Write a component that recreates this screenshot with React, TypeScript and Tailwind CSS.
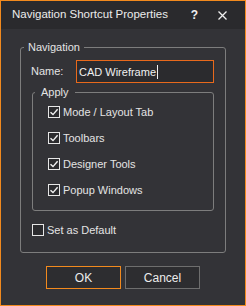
import { useState } from 'react'

const font = { fontFamily: '"Liberation Sans", Arial, sans-serif' }

function Check({ checked }: { checked: boolean }) {
  return (
    <span className="flex h-[12px] w-[12px] shrink-0 items-center justify-center border border-[#e6e6e6] bg-[#2b2b2e]">
      {checked && (
        <svg width="10" height="10" viewBox="0 0 10 10" fill="none">
          <path d="M1.5 5.2 L4 7.6 L8.6 2.2" stroke="#f2f2f2" strokeWidth="1.4" />
        </svg>
      )}
    </span>
  )
}

function CheckRow({ label, checked, onToggle }: { label: string; checked: boolean; onToggle: () => void }) {
  return (
    <label className="flex h-[14px] cursor-default items-center gap-[3px]" onClick={onToggle}>
      <Check checked={checked} />
      <span className="leading-[14px]">{label}</span>
    </label>
  )
}

export default function App() {
  const [name] = useState('CAD Wireframe')
  const [apply, setApply] = useState({ mode: true, toolbars: true, designer: true, popups: true })
  const [isDefault, setIsDefault] = useState(false)

  const toggle = (key: keyof typeof apply) => setApply(prev => ({ ...prev, [key]: !prev[key] }))

  return (
    <div
      className="flex h-[306px] w-[246px] flex-col border border-[#f28a1e] bg-[#333337] text-[11px] text-[#e4e4e4]"
      style={font}
    >
      {/* Title bar */}
      <div className="flex h-[28px] shrink-0 items-center bg-[#2a2a2d] pl-[11px] pr-[18px]">
        <span className="text-[11.5px] text-[#ececec]">Navigation Shortcut Properties</span>
        <span className="ml-auto mr-[20px] text-[12px] font-bold text-[#f0f0f0]">?</span>
        <svg width="9" height="9" viewBox="0 0 9 9">
          <path d="M0.5 0.5 L8.5 8.5 M8.5 0.5 L0.5 8.5" stroke="#f0f0f0" strokeWidth="1.3" />
        </svg>
      </div>

      {/* Body */}
      <div className="flex flex-1 flex-col px-[19px] pt-[12px]">
        <fieldset className="rounded-[3px] border border-[#7d7d7d] pb-[15px]">
          <legend className="ml-[3px] px-[4px] leading-[13px]">Navigation</legend>

          <div className="mt-[6px] flex items-center">
            <span className="w-[55px] pl-[10px]">Name:</span>
            {/* text box with the caret after the name */}
            <div className="flex h-[23px] w-[138px] items-center border border-[#e8691c] bg-[#2b2b2e] px-[2px] text-[#f0f0f0]">
              <span className="leading-[14px]">{name}</span>
              <span className="ml-[1px] h-[14px] w-px bg-[#f0f0f0]" />
            </div>
          </div>

          <fieldset className="ml-[11px] mt-[3px] w-[182px] rounded-[3px] border border-[#7d7d7d] pb-[13px]">
            <legend className="ml-[2px] px-[6px] leading-[13px]">Apply</legend>
            <div className="mt-[6px] flex flex-col gap-[12px] pl-[15px]">
              <CheckRow label="Mode / Layout Tab" checked={apply.mode} onToggle={() => toggle('mode')} />
              <CheckRow label="Toolbars" checked={apply.toolbars} onToggle={() => toggle('toolbars')} />
              <CheckRow label="Designer Tools" checked={apply.designer} onToggle={() => toggle('designer')} />
              <CheckRow label="Popup Windows" checked={apply.popups} onToggle={() => toggle('popups')} />
            </div>
          </fieldset>

          <div className="ml-[11px] mt-[12px]">
            <CheckRow label="Set as Default" checked={isDefault} onToggle={() => setIsDefault(v => !v)} />
          </div>
        </fieldset>

        {/* Buttons */}
        <div className="mt-[13px] flex justify-center gap-[4px]">
          <button className="h-[23px] w-[75px] border border-[#f28a1e] bg-[#2d2d30] text-[12px] text-[#ececec]" style={font}>
            OK
          </button>
          <button className="h-[23px] w-[75px] border border-[#6e6e6e] bg-[#2d2d30] text-[12px] text-[#ececec]" style={font}>
            Cancel
          </button>
        </div>
      </div>
    </div>
  )
}
